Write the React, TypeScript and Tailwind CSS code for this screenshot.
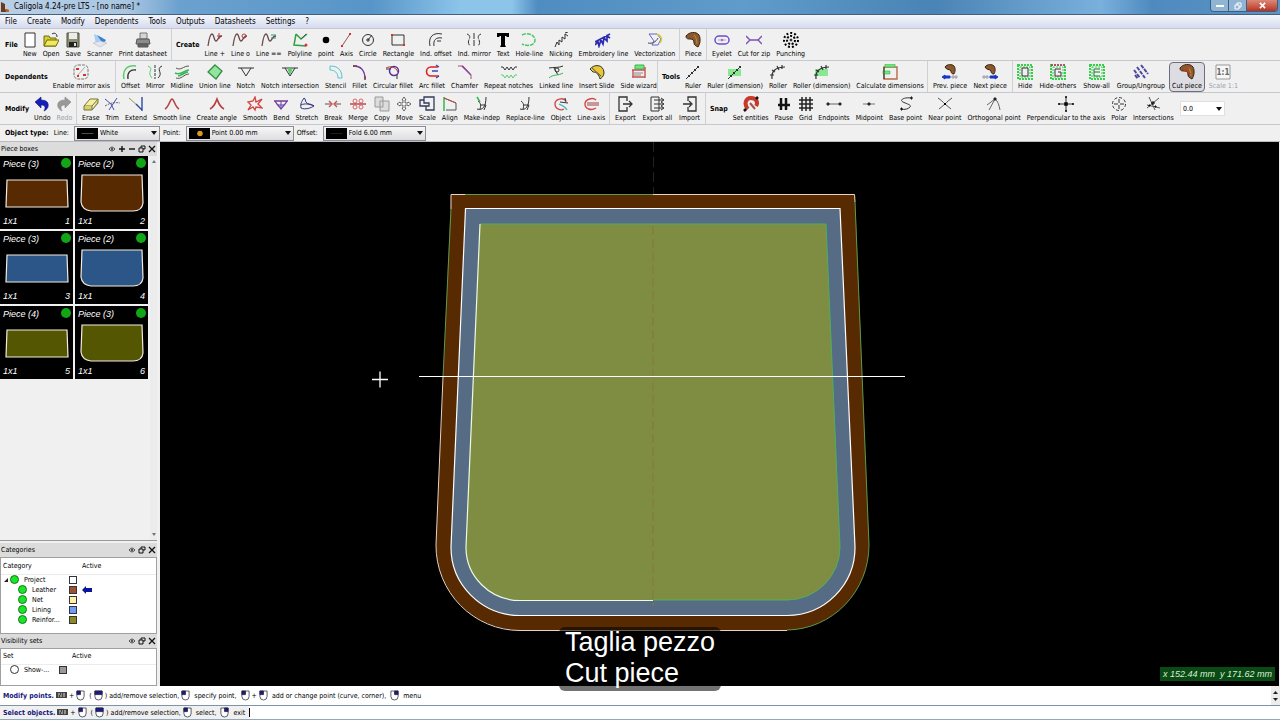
import React from 'react';

interface Tool {
  label: string;
  icon: React.ReactNode;
  pressed?: boolean;
  disabled?: boolean;
}

interface ToolGroupProps {
  title?: string;
  width: string;
  tools: Tool[];
}

// Small glyphs shared by several tools
const Hide = () => (
  <>
    <path d="M1 1h14v14H1z" stroke="#35d04a" strokeWidth={2} strokeDasharray="2 1" />
    <path d="M3 3h10v10H3z" stroke="#35d04a" strokeDasharray="2 1" />
  </>
);

const Saddle = () => (
  <>
    <path d="M1 4C4 0 11-1 14 3c2 4 1 9-1 12-2-1-4-2-4-4 0-3-1-4-4-4C3 7 1 7 1 4z" fill="#8a5a2c" stroke="#3c2411" />
    <path d="M9 3c2 2 3 5 3 9" stroke="#c48a4c" />
  </>
);

const SmallSaddle = () => (
  <path d="M3 3C5 0 10 0 12 2c2 3 1 6 0 8-2 0-3-1-3-3-1-2-5-1-6-4z" fill="#8a5a2c" stroke="#3c2411" />
);

const Hairs = () => (
  <path d="M1 14C2 7 3 2 5 2s2 7 4 7 2-5 6-5" strokeWidth={1.3} stroke="#6a4a4a" />
);

const Magnet = () => (
  <>
    <path d="M5 13C1 9 2 2 8 2s7 5 5 8" stroke="#c8392b" strokeWidth={4} />
    <path d="M1 15l2-2M13 3l2-2" strokeWidth={2.5} stroke="#111" />
    <path d="M7 7l5 6" stroke="#a8504a" strokeWidth={2} />
  </>
);

const RulerBar = () => <path d="M1 15L14 2M3 11l2 2M6 8l2 2M9 5l2 2M12 2l2 2" />;
const RollerArc = () => <path d="M2 15C1 7 6 3 15 3M0 11h4M2 6l3 2M7 2l2 4M12 1v4" strokeWidth={1.2} />;
const DimTag = () => <path d="M1 5h13v7H1z" fill="#6ee77b" stroke="none" opacity={0.8} />;

const fileTools: Tool[] = [
  { label: 'New', icon: <path d="M3 1h10v14H3z" fill="#fff" /> },
  {
    label: 'Open',
    icon: (
      <>
        <path d="M1 14V4h5l1 2h6v8z" fill="#d5ce32" stroke="#6e6a12" />
        <path d="M1 14l3-6h12l-3 6z" fill="#f0ea5a" stroke="#6e6a12" />
        <path d="M9 2c3-2 5 0 5 3" />
      </>
    ),
  },
  {
    label: 'Save',
    icon: (
      <>
        <path d="M2 1h12v14H2z" fill="#8b8f72" stroke="#4f5240" />
        <path d="M4 1h8v6H4z" fill="#ececec" stroke="none" />
        <path d="M4 10h8v5H4z" fill="#222" stroke="none" />
        <path d="M9 11h2v3H9z" fill="#ddd" stroke="none" />
      </>
    ),
  },
  {
    label: 'Scanner',
    icon: (
      <>
        <path d="M2 2l9 4-7 7z" fill="#a8cdf2" stroke="none" />
        <path d="M5 3l9 5-3 4z" fill="#3a7fd0" stroke="none" />
        <path d="M1 11l7 4 7-4-7-2z" fill="#e3e6ee" stroke="#b4b9c6" strokeWidth={0.6} />
      </>
    ),
  },
  {
    label: 'Print datasheet',
    icon: (
      <>
        <path d="M5 1h7v6H5z" fill="#d5d5d5" stroke="#777" />
        <path d="M2 7h12l1 5H1z" fill="#8c8c8c" stroke="#555" />
        <path d="M3 12h10v3H3z" fill="#666" stroke="#555" />
      </>
    ),
  },
];

const createTools: Tool[] = [
  { label: 'Line +', icon: <><Hairs /><path d="M10 4h5M12 1v6" stroke="#b03a3a" /></> },
  { label: 'Line o', icon: <><Hairs /><circle cx="12" cy="4" r="2" stroke="#b03a3a" /></> },
  { label: 'Line ==', icon: <><Hairs /><path d="M10 3h5M10 6h5" stroke="#2f9a6c" /></> },
  {
    label: 'Polyline',
    icon: (
      <>
        <path d="M14 5L12 1 2 7l1-5M2 7l1 6 11 0" stroke="none" />
        <path d="M4 2l5 5 6-5M4 2L2 13l12 1" stroke="#2fa044" strokeWidth={1.5} />
        <path d="M9 7l5-5" stroke="#3a6b45" />
        <circle cx="14" cy="13" r="1.5" fill="#d33" stroke="none" />
      </>
    ),
  },
  { label: 'point', icon: <circle cx="8" cy="8" r="3.3" fill="#000" stroke="none" /> },
  {
    label: 'Axis',
    icon: (
      <>
        <path d="M4 14l8-12" stroke="#a05050" />
        <path d="M3 13h2v2H3zM11 1h2v2h-2z" fill="#c33" stroke="none" />
      </>
    ),
  },
  {
    label: 'Circle',
    icon: (
      <>
        <circle cx="8" cy="8" r="5.5" />
        <path d="M6 8h4M8 6v4M8 8l4-5" />
      </>
    ),
  },
  {
    label: 'Rectangle',
    icon: (
      <>
        <path d="M2 3h12v10H2z" />
        <path d="M1 2h2v2H1zM13 12h2v2h-2z" fill="#c33" stroke="none" />
      </>
    ),
  },
  { label: 'Ind. offset', icon: <path d="M2 14C0 5 5 0 14 2M6 14C5 8 8 5 14 6M9 9h4" /> },
  { label: 'Ind. mirror', icon: <path d="M1 2c7 3-2 6 3 12M15 2c-7 3 2 7-3 12M8 1v14" strokeDasharray="6 1" /> },
  { label: 'Text', icon: <path d="M2 1h12v4h-2l-1-1H10v9l1 2H5l1-2V4H5L4 5H2z" fill="#000" stroke="none" /> },
  { label: 'Hole-line', icon: <path d="M1 3c6-3 13 0 13 5s-7 7-13 4" stroke="#4cc663" strokeWidth={1.5} strokeDasharray="4 1" /> },
  { label: 'Nicking', icon: <path d="M2 15l2-5 2 3V8l3 2V5l3 2V2l3 2M12 1l3-1" /> },
  {
    label: 'Embroidery line',
    icon: <path d="M0 13l3-3 1 4 2-6 2 4 1-6 3 3V4l3 2M0 10l15-8" stroke="#2b2bb0" strokeWidth={1.7} />,
  },
  {
    label: 'Vectorization',
    icon: (
      <>
        <path d="M2 2h8l4 5-3 6H5l2-4z" stroke="#6464c8" />
        <path d="M10 2c4 1 6 5 3 9" stroke="#d8cf38" strokeWidth={1.5} />
        <path d="M1 11c4 1 8-1 10-5" stroke="#445" />
      </>
    ),
  },
];

const eyeletTools: Tool[] = [
  {
    label: 'Eyelet',
    icon: (
      <>
        <rect x="1" y="4" width="14" height="8" rx="4" stroke="#6a50c8" strokeWidth={1.5} />
        <circle cx="8" cy="8" r="1.2" fill="#b0389a" stroke="none" />
        <path d="M4 8h8" stroke="#b49ae0" />
      </>
    ),
  },
  { label: 'Cut for zip', icon: <path d="M0 4l4 4-4 4M16 4l-4 4 4 4M4 8h8" stroke="#7a50b4" strokeWidth={1.4} /> },
  {
    label: 'Punching',
    icon: (
      <>
        <circle cx="8" cy="8" r="7" stroke="#000" strokeWidth={2} strokeDasharray="2 2" />
        <circle cx="8" cy="8" r="4" stroke="#000" strokeWidth={2} strokeDasharray="2 1.5" />
        <circle cx="8" cy="8" r="1" fill="#000" />
      </>
    ),
  },
];

const dependentTools: Tool[] = [
  {
    label: 'Offset',
    icon: (
      <>
        <path d="M2 15C0 6 5 1 14 2" stroke="#56cf6b" strokeWidth={1.5} />
        <path d="M6 15C5 9 8 5 14 6" strokeWidth={1.3} />
      </>
    ),
  },
  {
    label: 'Mirror',
    icon: (
      <>
        <path d="M1 2c7 3-2 6 4 12" stroke="#56cf6b" />
        <path d="M8 1v14" strokeDasharray="3 1" />
        <path d="M15 2c-7 3 2 7-4 12" />
      </>
    ),
  },
  {
    label: 'Midline',
    icon: (
      <>
        <path d="M2 4c5 3 7-2 13-2M2 14c5 2 8-4 13-4" stroke="#555" />
        <path d="M1 9c6 3 9-3 14-3M4 12c3 0 7-4 10-4" stroke="#35b852" strokeWidth={1.5} />
      </>
    ),
  },
  {
    label: 'Union line',
    icon: <path d="M8 1l7 6-6 8-8-7z" fill="#8fe79c" stroke="#3a8a48" strokeWidth={1.3} />,
  },
  { label: 'Notch', icon: <path d="M0 4h16M3 4l5 8 5-8" /> },
  {
    label: 'Notch intersection',
    icon: (
      <>
        <path d="M0 4h16M3 4l5 8 5-8" />
        <path d="M6 5h4l-2 5z" fill="#56cf6b" stroke="#56cf6b" />
      </>
    ),
  },
  { label: 'Stencil', icon: <path d="M2 2c8 0 12 4 12 12h-4c0-5-3-8-8-8z" stroke="#58c3cf" /> },
  {
    label: 'Fillet',
    icon: (
      <>
        <path d="M1 2c8 0 12 4 12 13" stroke="#7a3aa0" strokeWidth={1.3} />
        <path d="M1 2h4M13 12v4" stroke="#744" strokeWidth={1.5} />
      </>
    ),
  },
  {
    label: 'Circular fillet',
    icon: (
      <>
        <path d="M1 5h5M12 10v5" />
        <circle cx="9" cy="7" r="4.5" stroke="#55309a" strokeWidth={1.5} />
        <path d="M1 4c4-2 9-2 12 4" stroke="#a33" />
      </>
    ),
  },
  {
    label: 'Arc fillet',
    icon: (
      <>
        <path d="M14 3H7a4 4 0 0 0 0 9h8" stroke="#d22" strokeWidth={1.6} />
        <path d="M14 7H8M12 1l3 2M12 14l3-2" stroke="#334ab8" strokeWidth={1.3} />
      </>
    ),
  },
  {
    label: 'Chamfer',
    icon: (
      <>
        <path d="M1 2h5l8 9v4" stroke="#9a5a5a" />
        <path d="M5 2l9 9" stroke="#8a44a0" strokeWidth={1.5} />
      </>
    ),
  },
  {
    label: 'Repeat notches',
    icon: (
      <>
        <path d="M0 3h2l2 3 2-3 2 3 2-3 2 3 2-3h2" stroke="#333" />
        <path d="M0 11h2l2 3 2-3 2 3 2-3 2 3 2-3h2" stroke="#56cf6b" />
      </>
    ),
  },
  {
    label: 'Linked line',
    icon: (
      <>
        <path d="M1 4c5-1 10 0 14-2M6 4l4 7" />
        <path d="M1 14c4-4 9-2 14-5" stroke="#35b852" />
        <circle cx="9" cy="6" r="2" />
      </>
    ),
  },
  {
    label: 'Insert Slide',
    icon: (
      <>
        <path d="M1 5c4-5 13-5 14 3 0 3-1 5-4 7-1-4-3-7-7-7z" fill="#e9c733" stroke="#333" />
        <path d="M3 4l9 8" stroke="#555" />
      </>
    ),
  },
  {
    label: 'Side wizard',
    icon: (
      <>
        <path d="M4 1h9v4H4z" fill="#6ee77b" stroke="#35b852" />
        <path d="M1 6h13M1 13h13M2 6v7M14 3v11" stroke="#c85050" strokeWidth={1.4} />
        <path d="M3 9h9M3 11h7" stroke="#888" />
      </>
    ),
  },
];

const rulerTools: Tool[] = [
  { label: 'Ruler', icon: <RulerBar /> },
  { label: 'Ruler (dimension)', icon: <><DimTag /><RulerBar /></> },
  { label: 'Roller', icon: <RollerArc /> },
  { label: 'Roller (dimension)', icon: <><DimTag /><RollerArc /></> },
  {
    label: 'Calculate dimensions',
    icon: (
      <>
        <path d="M2 3h13v12H2z" stroke="#b86a4a" strokeWidth={1.4} />
        <path d="M3 0h10v3H3zM1 7h7v3H1z" fill="#6ee77b" stroke="#35b852" strokeWidth={0.6} />
        <path d="M2 3v12" stroke="#333" />
      </>
    ),
  },
];

const browseTools: Tool[] = [
  {
    label: 'Prev. piece',
    icon: (
      <>
        <SmallSaddle />
        <path d="M0 13l3-2v1h5v2H3v1z" fill="#1a36c8" stroke="#1a36c8" />
        <path d="M10 12h2v2h-2zM13 12h2v2h-2z" stroke="#99a" />
      </>
    ),
  },
  {
    label: 'Next piece',
    icon: (
      <>
        <SmallSaddle />
        <path d="M16 13l-3-2v1H8v2h5v1z" fill="#1a36c8" stroke="#1a36c8" />
        <path d="M1 12h2v2H1zM4 12h2v2H4z" stroke="#99a" />
      </>
    ),
  },
];

const visibilityTools: Tool[] = [
  { label: 'Hide', icon: <><Hide /><path d="M5 4h6v8H5z" stroke="#333" /></> },
  { label: 'Hide-others', icon: <><Hide /><path d="M1 1h14" stroke="#a56" strokeWidth={2} strokeDasharray="2 1" /><path d="M11 5H5v7h6V8H8" stroke="#333" /></> },
  { label: 'Show-all', icon: <><Hide /><path d="M11 5H5v7h6M5 8h6" stroke="#187a28" /></> },
  {
    label: 'Group/Ungroup',
    icon: <path d="M1 6l6 8M4 3l8 11M8 1l7 9M2 11l3 4" stroke="#4a4a9c" strokeWidth={2} strokeDasharray="4 1" />,
  },
  {
    label: 'Cut piece',
    pressed: true,
    icon: <><Saddle /><path d="M3 5l9 5M11 2L6 8" stroke="#c8341c" /></>,
  },
  {
    label: 'Scale 1:1',
    disabled: true,
    icon: (
      <>
        <path d="M1 1h14v14H1z" fill="#f7f7f7" stroke="#999" />
        <text x="8" y="11" textAnchor="middle" fontSize="8" fontWeight="bold" fill="#666" stroke="none">1:1</text>
      </>
    ),
  },
];

const modifyTools: Tool[] = [
  {
    label: 'Erase',
    icon: (
      <>
        <path d="M1 10l6-7h8l-6 7z" fill="#f4f0a0" stroke="#77703a" />
        <path d="M1 10v4h8v-4M9 14l6-7V3" fill="#d8d068" stroke="#77703a" />
      </>
    ),
  },
  { label: 'Trim', icon: <><path d="M1 3l6 5 3 6M5 14L13 2" stroke="#4a4ab4" /><path d="M1 10c5-3 9-4 15-3" stroke="#666" strokeDasharray="2 1" /></> },
  { label: 'Extend', icon: <><path d="M1 2l9 8" stroke="#8a9a50" /><path d="M8 8l6 6M14 1v14" stroke="#2c4aa8" strokeWidth={1.4} /></> },
  { label: 'Smooth line', icon: <path d="M1 13C5 11 6 3 8 3s3 8 7 10" stroke="#b84040" strokeWidth={1.6} /> },
  { label: 'Create angle', icon: <path d="M1 13C5 11 6 8 8 3c2 5 3 8 7 10" stroke="#b84040" strokeWidth={1.6} /> },
  { label: 'Smooth', icon: <path d="M8 1l1 5 6-3-4 5 4 4-6-1-1 3-2-3-5 3 3-5-3-3 5-1z" stroke="#d04545" strokeWidth={1.3} /> },
  { label: 'Bend', icon: <><path d="M1 5h14M2 5c2 4 4 5 6 8 2-3 4-4 6-8" stroke="#7a3a9a" strokeWidth={1.3} /><path d="M8 5v7M5 9h6" stroke="#4a4ab4" /></> },
  { label: 'Stretch', icon: <path d="M5 2C3 5 1 8 2 12c4 2 10 0 13-2-3-3-7-1-8-4-1-1 0-3-2-4zM2 9c4-2 8-1 13 1" stroke="#33337a" /> },
  { label: 'Break', icon: <><path d="M0 8h6M10 8h6" stroke="#555" /><path d="M4 5l3 3-3 3M12 5L9 8l3 3" stroke="#c85050" strokeWidth={1.4} /></> },
  { label: 'Merge', icon: <><circle cx="5" cy="5" r="2" stroke="#d06a6a" /><circle cx="11" cy="5" r="2" stroke="#d06a6a" /><path d="M0 8h16" stroke="#c03a3a" strokeWidth={1.4} /><circle cx="5" cy="11" r="2" stroke="#d06a6a" /><circle cx="11" cy="11" r="2" stroke="#d06a6a" /></> },
  { label: 'Copy', icon: <path d="M1 1h8v10H1zM6 5h9v10H6z" fill="#dcdcdc" stroke="#999" /> },
  { label: 'Move', icon: <path d="M8 1l2 3H9v3h3V6l3 2-3 2V9H9v3h1l-2 3-2-3h1V9H4v1L1 8l3-2v1h3V4H6z" fill="#fff" stroke="#444" strokeWidth={0.8} /> },
  { label: 'Scale', icon: <path d="M5 1h10v13H7v-4H1V4h4zM5 4v3h5v3H7" stroke="#333a5a" strokeWidth={1.3} /> },
  { label: 'Align', icon: <><path d="M2 15V1" stroke="#35b852" strokeWidth={1.5} /><path d="M2 2l12 5v7H4" stroke="#555" /><path d="M2 2l12 5" stroke="#c04444" /></> },
  { label: 'Make-indep', icon: <><path d="M3 13c6 2 9-3 9-12M4 5c3 2 3 5 2 8M6 9h6l-2 5" stroke="#333" /><path d="M3 1l3 5" stroke="#35b852" strokeWidth={1.5} /></> },
  { label: 'Replace-line', icon: <path d="M3 13c6 2 9-3 9-12M4 5c3 2 3 5 2 8M6 9h6l-2 5" stroke="#333" /> },
  { label: 'Object', icon: <><path d="M13 5C10 1 2 3 2 8s6 7 9 5" stroke="#d04a4a" strokeWidth={1.4} /><path d="M6 8c2 1 6 2 8 6" stroke="#42b8c0" strokeWidth={1.3} /><path d="M7 6l8 1M12 2l1 4" stroke="#334" /></> },
  { label: 'Line-axis', icon: <><path d="M13 4C10 1 2 3 2 8s6 7 11 4" stroke="#d04a4a" strokeWidth={1.4} /><path d="M4 7h12M4 9h12" stroke="#a04040" /></> },
];

const transferTools: Tool[] = [
  { label: 'Export', icon: <path d="M10 5V1H2v14h8v-4M6 8h9M12 5l3 3-3 3" strokeWidth={1.3} /> },
  { label: 'Export all', icon: <path d="M10 1H2v14h8M10 1v14M5 4h9M5 8h9M5 12h9M12 2l3 2-3 2M12 6l3 2-3 2M12 10l3 2-3 2" /> },
  { label: 'Import', icon: <path d="M6 5V1h8v14H6v-4M1 8h8M7 5l3 3-3 3" strokeWidth={1.3} /> },
];

const snapTools: Tool[] = [
  { label: 'Set entities', icon: <Magnet /> },
  { label: 'Pause', icon: <path d="M5 2v12M10 2v12M2 9h12" stroke="#111" strokeWidth={2.5} /> },
  { label: 'Grid', icon: <path d="M4 1v14M8 1v14M12 1v14M1 4h14M1 8h14M1 12h14" stroke="#222" strokeWidth={1.5} /> },
  { label: 'Endpoints', icon: <><path d="M2 8h12" stroke="#666" /><path d="M1 7h2v2H1zM13 7h2v2h-2z" fill="#000" /></> },
  { label: 'Midpoint', icon: <><path d="M2 8h12" stroke="#777" /><path d="M7 7h2v2H7z" fill="#000" /></> },
  { label: 'Base point', icon: <><path d="M13 2C6 1 1 4 5 6s9 3 7 5-5 3-9 2" /><path d="M13 1h1v2h-1zM3 12h1v2H3z" stroke="#000" /></> },
  { label: 'Near point', icon: <><path d="M1 2c3 2 5 4 7 6 2-2 4-4 7-6M2 13l6-5 6 5" stroke="#555" /><path d="M7 7h2v2H7z" fill="#000" stroke="none" /></> },
  { label: 'Orthogonal point', icon: <><path d="M1 9L9 3c3 2 4 6 5 11M9 3L3 14" stroke="#666" /><path d="M8 2h2v2H8z" fill="#000" /></> },
  { label: 'Perpendicular to the axis', icon: <><path d="M1 8h14M8 1v14" /><path d="M7 1h2M7 15h2M1 7v2M15 7v2M7 7h2v2H7z" stroke="#000" strokeWidth={1.5} /></> },
  { label: 'Polar', icon: <><circle cx="8" cy="8" r="6.5" strokeDasharray="3 2" /><path d="M8 3v10M3 8h10" strokeDasharray="4 2" /></> },
  { label: 'Intersections', icon: <><path d="M4 1l6 13M14 2L2 12M2 9l13 3" stroke="#555" /><path d="M7 6h2v2H7zM4 9h1v1H4zM10 10h1v1h-1z" stroke="#000" /></> },
];

const mirrorAxisTool: Tool[] = [
  {
    label: 'Enable mirror axis',
    icon: (
      <>
        <rect x="1" y="1" width="14" height="14" rx="4" stroke="#777" strokeDasharray="3 1" />
        <path d="M4 12l8-9" stroke="#a8a8a8" />
        <path d="M3 4h3v2H3zM10 10h3v2h-3zM4 11h2v2H4z" fill="#d83030" stroke="none" />
      </>
    ),
  },
];

const historyTools: Tool[] = [
  { label: 'Undo', icon: <path d="M1 6l6-5v3c6 0 8 3 7 7-1 2-2 3-4 4 2-4 1-6-3-6v3z" fill="#1420b8" stroke="#0c1480" strokeWidth={0.6} /> },
  {
    label: 'Redo',
    disabled: true,
    icon: <path d="M15 6L9 1v3C3 4 1 7 2 11c1 2 2 3 4 4-2-4-1-6 3-6v3z" fill="#999" stroke="#888" strokeWidth={0.6} />,
  },
];

const menus = ['File', 'Create', 'Modify', 'Dependents', 'Tools', 'Outputs', 'Datasheets', 'Settings', '?'];

const RECT_PATH = 'M7 24H67L68 51H6z';
const POCKET_PATH = 'M7 19H67L68 47Q67 55 58 55H16Q7 54 6 46z';

const pieces = [
  { name: 'Piece (3)', path: RECT_PATH, fill: '#572a02' },
  { name: 'Piece (2)', path: POCKET_PATH, fill: '#572a02' },
  { name: 'Piece (3)', path: RECT_PATH, fill: '#2c5588' },
  { name: 'Piece (2)', path: POCKET_PATH, fill: '#2c5588' },
  { name: 'Piece (4)', path: RECT_PATH, fill: '#545602' },
  { name: 'Piece (3)', path: POCKET_PATH, fill: '#545602' },
];

const categories = [
  { name: 'Leather', color: 'bg-[#a0522d]', active: true },
  { name: 'Net', color: 'bg-[#fff2a0]' },
  { name: 'Lining', color: 'bg-[#6f9cf5]' },
  { name: 'Reinfor...', color: 'bg-[#8f8a1c]' },
];

const ToolButton: React.FC<{ tool: Tool }> = ({ tool }) => (
  <button
    type="button"
    disabled={tool.disabled}
    aria-pressed={tool.pressed}
    className={
      tool.pressed
        ? 'flex h-[30px] flex-col items-center gap-px rounded-sm border border-[#6e6e78] bg-[#dcdce2] px-[2px] pt-px'
        : 'flex h-[30px] flex-col items-center gap-px px-[3px] pt-[2px] disabled:text-gray-400'
    }
  >
    <svg viewBox="0 0 16 16" className="-mx-1 h-4 w-4 shrink-0" fill="none" stroke="#333" aria-hidden="true">
      {tool.icon}
    </svg>
    <span className="leading-[10px] whitespace-nowrap">{tool.label}</span>
  </button>
);

const ToolGroup: React.FC<ToolGroupProps> = ({ title, width, tools }) => (
  <div className={`flex shrink-0 items-center border-r border-[#cfcfd6] ${width}`}>
    {title && <h2 className="pl-1 text-[7px] font-bold">{title}</h2>}
    <div className="flex flex-1 justify-between px-[2px]">
      {tools.map((tool) => (
        <ToolButton key={tool.label} tool={tool} />
      ))}
    </div>
  </div>
);

const ToolRow: React.FC<{ children: React.ReactNode }> = ({ children }) => (
  <div className="flex h-8 items-stretch border-b border-[#c8c8ce] pl-px">{children}</div>
);

const Arrow = () => (
  <svg viewBox="0 0 6 4" className="pointer-events-none absolute top-1/2 right-[3px] h-1 w-[6px] -translate-y-1/2" aria-hidden="true">
    <path d="M0 0h6L3 4z" fill="#111" />
  </svg>
);

const PropertySelect: React.FC<{ id: string; label: string; value: string; width: string; children?: React.ReactNode }> = ({
  id,
  label,
  value,
  width,
  children,
}) => (
  <div className="flex items-center gap-[5px] pr-[3px]">
    <label htmlFor={id}>{label}</label>
    <div className={`relative ${width}`}>
      <select
        id={id}
        className="block h-[15px] w-full appearance-none border border-[#8c8c94] bg-gradient-to-b from-[#f6f6f6] to-[#dedee2] pl-[25px]"
      >
        <option>{value}</option>
      </select>
      <svg viewBox="0 0 21 12" className="pointer-events-none absolute top-[2px] left-[3px] h-[11px] w-[21px] bg-black" aria-hidden="true">
        {children}
      </svg>
      <Arrow />
    </div>
  </div>
);

const PanelHeader: React.FC<{ title: string; resizable?: boolean }> = ({ title, resizable }) => (
  <header className="flex h-[14px] shrink-0 items-center justify-between bg-[#dcdcdc] pr-px pl-px">
    <h2 className="text-[7px]">{title}</h2>
    <div className="flex gap-[2px]">
      <button type="button" aria-label={`Show ${title}`}>
        <svg viewBox="0 0 8 8" className="h-2 w-2" fill="none" stroke="#555">
          <path d="M1 4q3-4 6 0q-3 4-6 0z" />
          <circle cx="4" cy="4" r="1" fill="#333" />
        </svg>
      </button>
      {resizable && (
        <>
          <button type="button" aria-label="Larger">
            <svg viewBox="0 0 8 8" className="h-2 w-2" stroke="#111" strokeWidth={1.4}><path d="M1 4h6M4 1v6" /></svg>
          </button>
          <button type="button" aria-label="Smaller">
            <svg viewBox="0 0 8 8" className="h-2 w-2" stroke="#111" strokeWidth={1.4}><path d="M1 4h6" /></svg>
          </button>
        </>
      )}
      <button type="button" aria-label={`Float ${title}`}>
        <svg viewBox="0 0 8 8" className="h-2 w-2" fill="none" stroke="#111"><path d="M3 3V1h4v3H5M1 3h4v4H1z" /></svg>
      </button>
      <button type="button" aria-label={`Close ${title}`}>
        <svg viewBox="0 0 8 8" className="h-2 w-2" stroke="#111" strokeWidth={1.3}><path d="M1 1l6 6M7 1l-6 6" /></svg>
      </button>
    </div>
  </header>
);

const Led = () => <span className="inline-block h-[9px] w-[9px] shrink-0 rounded-full border border-[#157a15] bg-[#19e52a]" />;

// Mouse with the given button highlighted
const Mouse: React.FC<{ button: 'left' | 'middle' | 'right' }> = ({ button }) => (
  <svg viewBox="0 0 10 12" className="h-[11px] w-[9px] shrink-0" fill="#fff" stroke="#223" strokeWidth={0.8} aria-hidden="true">
    <path d="M1 1h8v6q0 4-4 4T1 7z" />
    {button === 'left' && <path d="M1 1h4v4H1z" fill="#1a1a8c" />}
    {button === 'middle' && <path d="M1 1h8v4H1z" fill="#1a1a8c" />}
    {button === 'right' && <path d="M5 1h4v4H5z" fill="#1a1a8c" />}
  </svg>
);

const Ctrl = () => (
  <svg viewBox="0 0 11 6" className="mb-[2px] h-[6px] w-[11px] shrink-0" aria-hidden="true">
    <path d="M0 0h11v6H0z" fill="#444" />
    <path d="M2 2h2M5 2h1M7 2h2M2 4h1M4 4h2M7 4h2" stroke="#ddd" />
  </svg>
);

const SelectionHint = () => (
  <>
    <Ctrl />
    <span>+</span>
    <Mouse button="left" />
    <span className="pl-[2px]">(</span>
    <Mouse button="middle" />
    <span>)</span>
    <span>add/remove selection,</span>
  </>
);

const Drawing = () => (
  <svg viewBox="0 0 1119 544" preserveAspectRatio="xMidYMid slice" className="h-full w-full" fill="none" role="img" aria-label="Pattern">
    <path d="M493.500 0V52" stroke="#222" strokeDasharray="10 5" />
    <path d="M291 52H695L709 403A83 85 0 0 1 627 488H360A84 85 0 0 1 276 403z" fill="#572a02" />
    <path d="M291 67V52.500H305M493 52.500H694.500L695 60M283 235L276 403A84 85 0 0 0 360 488.500H627" stroke="#e8d2c4" />
    <path d="M305 52.500H493M291 67L283 235M695 60L709 403A83 85 0 0 1 627 488" stroke="#5f9a4a" />
    <path d="M305.500 66.500H680L695 405A68 68 0 0 1 627 473.500H360A69 68 0 0 1 291 405z" fill="#566b84" stroke="#fff" strokeWidth={1.2} />
    <path d="M320 82H666L680 405A53 53 0 0 1 627 458H360A54 53 0 0 1 306 405z" fill="#7f8d42" />
    <path d="M320 82H666L680 405A53 53 0 0 1 627 458H493" stroke="#4fae62" />
    <path d="M320 82L306 405A54 53 0 0 0 360 458.500H493" stroke="#eefbe4" strokeWidth={1.2} />
    <path d="M493 84V464" stroke="#8f7238" strokeDasharray="9 4" />
    <path d="M259 234.500H745" stroke="#fff" strokeWidth={1.2} />
    <path d="M212 237.500h16M220 229.500v16" stroke="#fff" strokeWidth={1.3} />
  </svg>
);

const App: React.FC = () => {
  return (
    <div className="relative flex h-screen min-h-[600px] flex-col overflow-hidden bg-[#f0f0f0] font-['DejaVu_Sans_Condensed','DejaVu_Sans',sans-serif] text-[7px] leading-[10px] text-black">
      <header className="flex h-[15px] shrink-0 items-start justify-between border-b border-[#44607c] bg-[linear-gradient(90deg,#b9cfe6_0%,#a9c6e2_10%,#6ba1cf_14%,#5795c8_29%,#8cc4ea_36%,#8cc4ea_40%,#4f8cc0_42%,#5f9ccb_58%,#4a83b5_73%,#79b0dc_86%,#4f8abf_90%,#5c93c4_100%)] pr-[2px]">
        <div className="flex h-[14px] items-center gap-1">
          <svg viewBox="0 0 10 12" className="h-3 w-[10px]" aria-hidden="true">
            <path d="M1 1l4 2v5l4 1v2H1z" fill="#6b3a1c" />
            <path d="M5 8l4 1v2H6z" fill="#c0602c" />
          </svg>
          <h1 className="text-[8px]">Caligola 4.24-pre LTS - [no name] *</h1>
        </div>
        <div className="flex h-[12px] overflow-hidden rounded-b-sm border border-t-0 border-[#3f5f80]">
          <button type="button" aria-label="Minimize" className="flex w-[18px] items-center justify-center border-r border-[#3f5f80] bg-[#8fb4d4]">
            <span className="h-[2px] w-2 bg-white" />
          </button>
          <button type="button" aria-label="Restore" className="flex w-[18px] items-center justify-center border-r border-[#3f5f80] bg-[#8fb4d4]">
            <svg viewBox="0 0 8 8" className="h-2 w-2" fill="none" stroke="#fff"><path d="M3 3V1h4v4H5M1 3h4v4H1z" /></svg>
          </button>
          <button type="button" aria-label="Close" className="flex w-[30px] items-center justify-center bg-gradient-to-b from-[#d98878] to-[#b8301c]">
            <svg viewBox="0 0 8 8" className="h-[7px] w-[7px]" stroke="#fff" strokeWidth={1.8}><path d="M1 1l6 6M7 1l-6 6" /></svg>
          </button>
        </div>
      </header>

      <nav className="flex h-[14px] shrink-0 items-center gap-[10px] border-b border-[#c4c8d4] bg-gradient-to-b from-[#f4f6fb] to-[#d6dcef] pl-[5px] text-[8px]">
        {menus.map((menu) => (
          <button key={menu} type="button">{menu}</button>
        ))}
      </nav>

      <div className="shrink-0">
        <ToolRow>
          <ToolGroup title="File" width="w-[171px]" tools={fileTools} />
          <ToolGroup title="Create" width="w-[508px]" tools={createTools} />
          <ToolGroup width="w-[27px]" tools={[{ label: 'Piece', icon: <Saddle /> }]} />
          <ToolGroup width="w-[103px] border-r-0" tools={eyeletTools} />
        </ToolRow>
        <ToolRow>
          <ToolGroup title="Dependents" width="w-[115px]" tools={mirrorAxisTool} />
          <ToolGroup width="w-[542px]" tools={dependentTools} />
          <ToolGroup title="Tools" width="w-[270px]" tools={rulerTools} />
          <ToolGroup width="w-[85px]" tools={browseTools} />
          <ToolGroup width="w-[230px] border-r-0" tools={visibilityTools} />
        </ToolRow>
        <ToolRow>
          <ToolGroup title="Modify" width="w-[76px]" tools={historyTools} />
          <ToolGroup width="w-[533px]" tools={modifyTools} />
          <ToolGroup width="w-[96px]" tools={transferTools} />
          <ToolGroup title="Snap" width="w-[472px] border-r-0" tools={snapTools} />
          <div className="relative my-2 ml-[2px] w-[45px]">
            <select aria-label="Snap angle" className="block h-[15px] w-full appearance-none border border-[#e0e0e0] bg-white pl-[2px]">
              <option>0.0</option>
            </select>
            <Arrow />
          </div>
        </ToolRow>
        <div className="flex h-[17px] items-center border-b border-[#bcbcc0] pl-[5px]">
          <h2 className="pr-[5px] text-[7px] font-bold">Object type:</h2>
          <PropertySelect id="line" label="Line:" value="White" width="w-[86px]">
            <path d="M4 6h13" stroke="#555" />
          </PropertySelect>
          <PropertySelect id="point" label="Point:" value="Point 0.00 mm" width="w-[108px]">
            <circle cx="11" cy="6" r="3" fill="#d89a20" />
          </PropertySelect>
          <PropertySelect id="offset" label="Offset:" value="Fold 6.00 mm" width="w-[103px]">
            <path d="M4 6h13" stroke="#222" />
          </PropertySelect>
        </div>
      </div>

      <div className="flex min-h-0 flex-1">
        <aside className="flex w-40 shrink-0 flex-col bg-[#f0f0f0] pr-[3px]">
          <PanelHeader title="Piece boxes" resizable />
          <div className="flex min-h-0 flex-1 justify-between border-b border-[#999]">
            <ul className="grid grid-cols-[73px_73px] content-start gap-[2px] font-['Liberation_Sans',sans-serif] text-[9px] text-white italic">
              {pieces.map((piece, index) => (
                <li key={index} className="relative flex h-[73px] flex-col justify-between bg-black px-[3px] py-[3px]">
                  <svg viewBox="0 0 73 73" className="absolute inset-0 h-full w-full" aria-hidden="true">
                    <path d={piece.path} fill={piece.fill} stroke="#f4ece0" strokeWidth={1.2} />
                    <circle cx="66" cy="7" r="5" fill="#12a516" />
                  </svg>
                  <span className="relative">{piece.name}</span>
                  <span className="relative flex justify-between">
                    <span>1x1</span>
                    <span>{index + 1}</span>
                  </span>
                </li>
              ))}
            </ul>
            <div className="flex w-[7px] flex-col items-center justify-between bg-[#ececec] py-1">
              <svg viewBox="0 0 4 3" className="h-[3px] w-1" aria-hidden="true"><path d="M0 3l2-3 2 3z" fill="#678" /></svg>
              <svg viewBox="0 0 4 3" className="h-[3px] w-1" aria-hidden="true"><path d="M0 0l2 3 2-3z" fill="#678" /></svg>
            </div>
          </div>

          <section className="mt-[2px] shrink-0">
            <PanelHeader title="Categories" />
            <div className="h-[77px] border border-[#a0a0a0] bg-white">
              <table className="w-full table-fixed text-left">
                <thead>
                  <tr className="h-4 border-b border-[#ececec]">
                    <th className="w-[68px] pl-[2px] font-normal">Category</th>
                    <th className="w-[13px]" />
                    <th className="font-normal">Active</th>
                  </tr>
                </thead>
                <tbody>
                  <tr className="h-[10px]">
                    <td>
                      <div className="flex items-center gap-[5px] pl-[3px]">
                        <span className="flex items-center gap-[2px]">
                          <svg viewBox="0 0 4 4" className="h-1 w-1" aria-hidden="true"><path d="M4 0v4H0z" fill="#222" /></svg>
                          <Led />
                        </span>
                        Project
                      </div>
                    </td>
                    <td><span className="block h-2 w-2 border border-[#334] bg-white" /></td>
                    <td />
                  </tr>
                  {categories.map((category) => (
                    <tr key={category.name} className="h-[10px]">
                      <td>
                        <div className="flex items-center gap-[5px] pl-[17px]">
                          <Led />
                          {category.name}
                        </div>
                      </td>
                      <td><span className={`block h-2 w-2 border border-[#334] ${category.color}`} /></td>
                      <td>
                        {category.active && (
                          <svg viewBox="0 0 10 8" className="h-2 w-[10px]" aria-label="Active">
                            <path d="M0 4l4-4v2h6v4H4v2z" fill="#0d149c" />
                          </svg>
                        )}
                      </td>
                    </tr>
                  ))}
                </tbody>
              </table>
            </div>
          </section>

          <section className="shrink-0">
            <PanelHeader title="Visibility sets" />
            <div className="h-[38px] border border-[#a0a0a0] bg-white">
              <table className="w-full table-fixed text-left">
                <thead>
                  <tr className="h-[15px] border-b border-[#ececec]">
                    <th className="w-[58px] pl-[2px] font-normal">Set</th>
                    <th className="w-[13px]" />
                    <th className="font-normal">Active</th>
                  </tr>
                </thead>
                <tbody>
                  <tr className="h-[10px]">
                    <td>
                      <div className="flex items-center gap-[5px] pl-[9px]">
                        <span className="h-[9px] w-[9px] rounded-full border border-[#333]" />
                        Show-...
                      </div>
                    </td>
                    <td><span className="block h-2 w-2 border border-[#333] bg-[#999]" /></td>
                    <td />
                  </tr>
                </tbody>
              </table>
            </div>
          </section>
        </aside>

        <main className="relative mr-px min-w-0 flex-1 bg-black">
          <Drawing />
          <output className="absolute right-1 bottom-[5px] bg-[#0a4a14] px-[3px] font-['Liberation_Sans',sans-serif] text-[9px] leading-[14px] whitespace-pre text-[#d9f0d4] italic">
            x 152.44 mm{'  '}y 171.62 mm
          </output>
        </main>
      </div>

      <footer className="shrink-0">
        <div className="flex h-5 items-center gap-[2px] border-b border-[#7f93a8] bg-white pl-[3px]">
          <strong className="text-[#15157a]">Modify points.</strong>
          <SelectionHint />
          <Mouse button="left" />
          <span className="px-[2px]">specify point,</span>
          <Mouse button="left" />
          <span>+</span>
          <Mouse button="left" />
          <span className="px-[2px]">add or change point (curve, corner),</span>
          <Mouse button="right" />
          <span className="pl-[2px]">menu</span>
          <div className="ml-auto flex h-full w-[9px] flex-col items-center justify-center gap-1 bg-[#ececec]">
            <svg viewBox="0 0 5 3" className="h-[3px] w-[5px]" aria-hidden="true"><path d="M0 3l2.500-3L5 3z" fill="#222" /></svg>
            <svg viewBox="0 0 5 3" className="h-[3px] w-[5px]" aria-hidden="true"><path d="M0 0l2.500 3L5 0z" fill="#222" /></svg>
          </div>
        </div>
        <div className="flex h-[14px] items-stretch border-b border-[#8fa9b8] bg-white">
          <label htmlFor="command" className="flex items-center gap-[2px] bg-[#f0f0f0] pr-1 pl-[3px]">
            <strong className="text-[#15157a]">Select objects.</strong>
            <SelectionHint />
            <Mouse button="left" />
            <span className="px-[2px]">select,</span>
            <Mouse button="right" />
            <span className="pl-[2px]">exit</span>
          </label>
          <span className="my-[2px] w-px bg-black" />
          <input id="command" type="text" className="min-w-0 flex-1 bg-white px-px outline-none" />
        </div>
      </footer>

      {/* Subtitle */}
      <div className="absolute bottom-[29px] left-1/2 -translate-x-1/2 rounded-md bg-black/55 px-[6px] pb-[2px] font-['Liberation_Sans',sans-serif] text-[27px] leading-[31px] whitespace-nowrap text-white">
        <p>Taglia pezzo</p>
        <p>Cut piece</p>
      </div>
    </div>
  );
};

export default App;
